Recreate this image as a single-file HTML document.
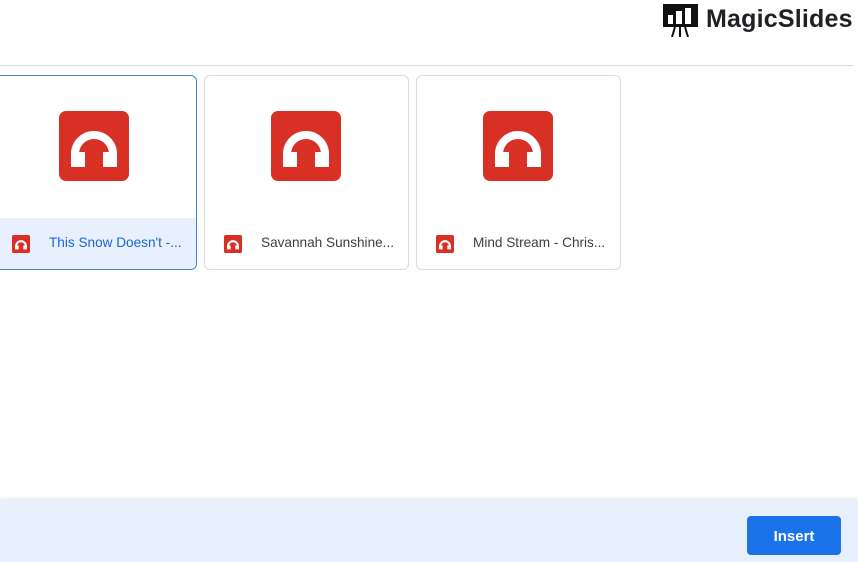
<!DOCTYPE html>
<html><head><style>
body{margin:0;width:858px;height:562px;overflow:hidden;background:#fff;font-family:"Liberation Sans",Arial,sans-serif;position:relative}
.hdr{position:absolute;left:0;top:0;width:853px;height:65px;border-bottom:1px solid #dadce0}
.logo{position:absolute;left:663px;top:3px}
.lt{position:absolute;left:706px;top:5px;font-size:25px;font-weight:bold;color:#202124;letter-spacing:0.2px}
.card{position:absolute;top:75px;width:203px;height:193px;border:1px solid #dadce0;border-radius:6px;overflow:hidden;background:#fff}
.card.sel{border-color:#4a80d8}
.big{position:absolute;left:66px;top:35px}
.foot{position:absolute;left:0;right:0;top:142px;height:51px}
.sel .foot{background:#e8f0fe}
.sm{position:absolute;left:19px;top:17px}
.t{position:absolute;left:56px;top:17px;font-size:13.6px;color:#3c4043;white-space:nowrap}
.sel .t{color:#1967d2}
.bar{position:absolute;left:0;top:500px;width:858px;height:62px;background:#e8f0fe;box-shadow:0 -2px 3px rgba(0,0,0,0.08)}
.btn{position:absolute;left:747px;top:16px;width:94px;height:39px;background:#1a73e8;border-radius:4px;color:#fff;font-weight:bold;font-size:15px;text-align:center;line-height:41px}
</style></head><body>
<svg width="0" height="0" style="position:absolute"><defs>
<symbol id="hp" viewBox="0 0 70 70"><rect width="70" height="70" rx="7" fill="#d93025"/><path d="M16,48 V43 A19,19 0 0 1 54,43 V48" fill="none" stroke="#fff" stroke-width="8"/><rect x="12" y="41" width="14" height="15" fill="#fff"/><rect x="44" y="41" width="14" height="15" fill="#fff"/></symbol>
</defs></svg>
<div class="hdr">
<svg class="logo" width="35" height="34" viewBox="0 0 35 34"><rect x="0" y="1" width="35" height="23" fill="#111"/><rect x="5" y="12" width="5" height="9" fill="#fff"/><rect x="13" y="8" width="6" height="13" fill="#fff"/><rect x="22" y="5" width="6" height="16" fill="#fff"/><path d="M12,24 L9,34 M17,24 V34 M22,24 L25,34" stroke="#111" stroke-width="2"/></svg>
<div class="lt">MagicSlides</div>
</div>
<div class="card sel" style="left:-8px"><svg class="big" width="70" height="70"><use href="#hp"/></svg><div class="foot"><svg class="sm" width="18" height="18"><use href="#hp"/></svg><div class="t">This Snow Doesn't -...</div></div></div>
<div class="card" style="left:204px"><svg class="big" width="70" height="70"><use href="#hp"/></svg><div class="foot"><svg class="sm" width="18" height="18"><use href="#hp"/></svg><div class="t">Savannah Sunshine...</div></div></div>
<div class="card" style="left:416px"><svg class="big" width="70" height="70"><use href="#hp"/></svg><div class="foot"><svg class="sm" width="18" height="18"><use href="#hp"/></svg><div class="t">Mind Stream - Chris...</div></div></div>
<div class="bar"><div class="btn">Insert</div></div>
</body></html>
